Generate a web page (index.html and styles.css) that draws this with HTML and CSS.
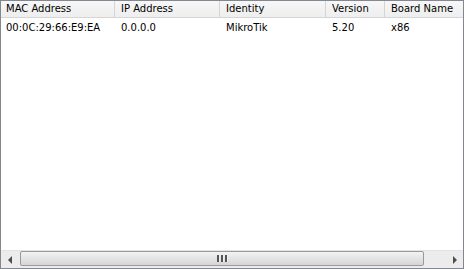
FILE: index.html
```html
<!DOCTYPE html>
<html lang="en">
<head>
    <meta charset="UTF-8">
    <title>Neighbors</title>
    <link rel="stylesheet" href="styles.css">
</head>
<body>

    <!-- Neighbor list -->
    <div class="list">
        <div class="row head">
            <div class="cell c-mac">MAC Address</div>
            <div class="cell c-ip">IP Address</div>
            <div class="cell c-id">Identity</div>
            <div class="cell c-ver">Version</div>
            <div class="cell c-board">Board Name</div>
        </div>
        <div class="rows">
            <div class="row">
                <div class="cell c-mac">00:0C:29:66:E9:EA</div>
                <div class="cell c-ip">0.0.0.0</div>
                <div class="cell c-id">MikroTik</div>
                <div class="cell c-ver">5.20</div>
                <div class="cell c-board">x86</div>
            </div>
        </div>

        <!-- Horizontal scrollbar -->
        <div class="hscroll">
            <div class="arrow">
                <svg width="5" height="8" viewBox="0 0 5 8"><path d="M4 0 L0 4 L4 8 Z" fill="#4d4d4d"/></svg>
            </div>
            <div class="track">
                <div class="thumb">
                    <span class="grip"></span><span class="grip"></span><span class="grip"></span>
                </div>
            </div>
            <div class="arrow">
                <svg width="5" height="8" viewBox="0 0 5 8"><path d="M1 0 L5 4 L1 8 Z" fill="#4d4d4d"/></svg>
            </div>
        </div>
    </div>

</body>
</html>
```

FILE: styles.css
```css
html, body {
    margin: 0;
    padding: 0;
    background: #fff;
}

body {
    font-family: "DejaVu Sans", sans-serif;
    font-size: 10px;
    color: #000;
}

.list {
    width: 464px;
    height: 269px;
    box-sizing: border-box;
    border: 1px solid #828790;
    display: flex;
    flex-direction: column;
}

.row {
    display: flex;
    height: 17px;
    align-items: center;
}

.cell {
    box-sizing: border-box;
    padding-left: 6px;
    white-space: nowrap;
    overflow: hidden;
}

/* column widths */
.c-mac { width: 114px; }
.c-ip { width: 105px; }
.c-id { width: 106px; }
.c-ver { width: 59px; }
.c-board { flex: 1; }

.head {
    background: linear-gradient(#f7f7f7, #eeeeee);
    border-bottom: 1px solid #d5d5d5;
    height: 16px;
}

.head .cell {
    height: 16px;
    line-height: 16px;
    border-right: 1px solid #d5d5d5;
}

.head .cell:first-child,
.rows .cell:first-child {
    padding-left: 5px;
}

.head .cell:last-child {
    border-right: 0;
}

.rows {
    flex: 1;
}

.rows .row {
    height: 18px;
}

/* scrollbar */
.hscroll {
    height: 17px;
    display: flex;
    background: #ececec;
    border-top: 1px solid #e3e3e3;
}

.arrow {
    width: 18px;
    display: flex;
    align-items: center;
    justify-content: center;
}

.track {
    flex: 1;
    padding: 0 1px;
}

.thumb {
    width: 404px;
    height: 15px;
    box-sizing: border-box;
    border: 1px solid #9a9a9a;
    border-radius: 2px;
    background: linear-gradient(#f3f3f3, #e4e4e4 50%, #d6d6d6);
    display: flex;
    justify-content: center;
    align-items: center;
    gap: 1px;
}

.grip {
    width: 2px;
    height: 7px;
    background: #555;
    border-right: 1px solid #f0f0f0;
}
```
